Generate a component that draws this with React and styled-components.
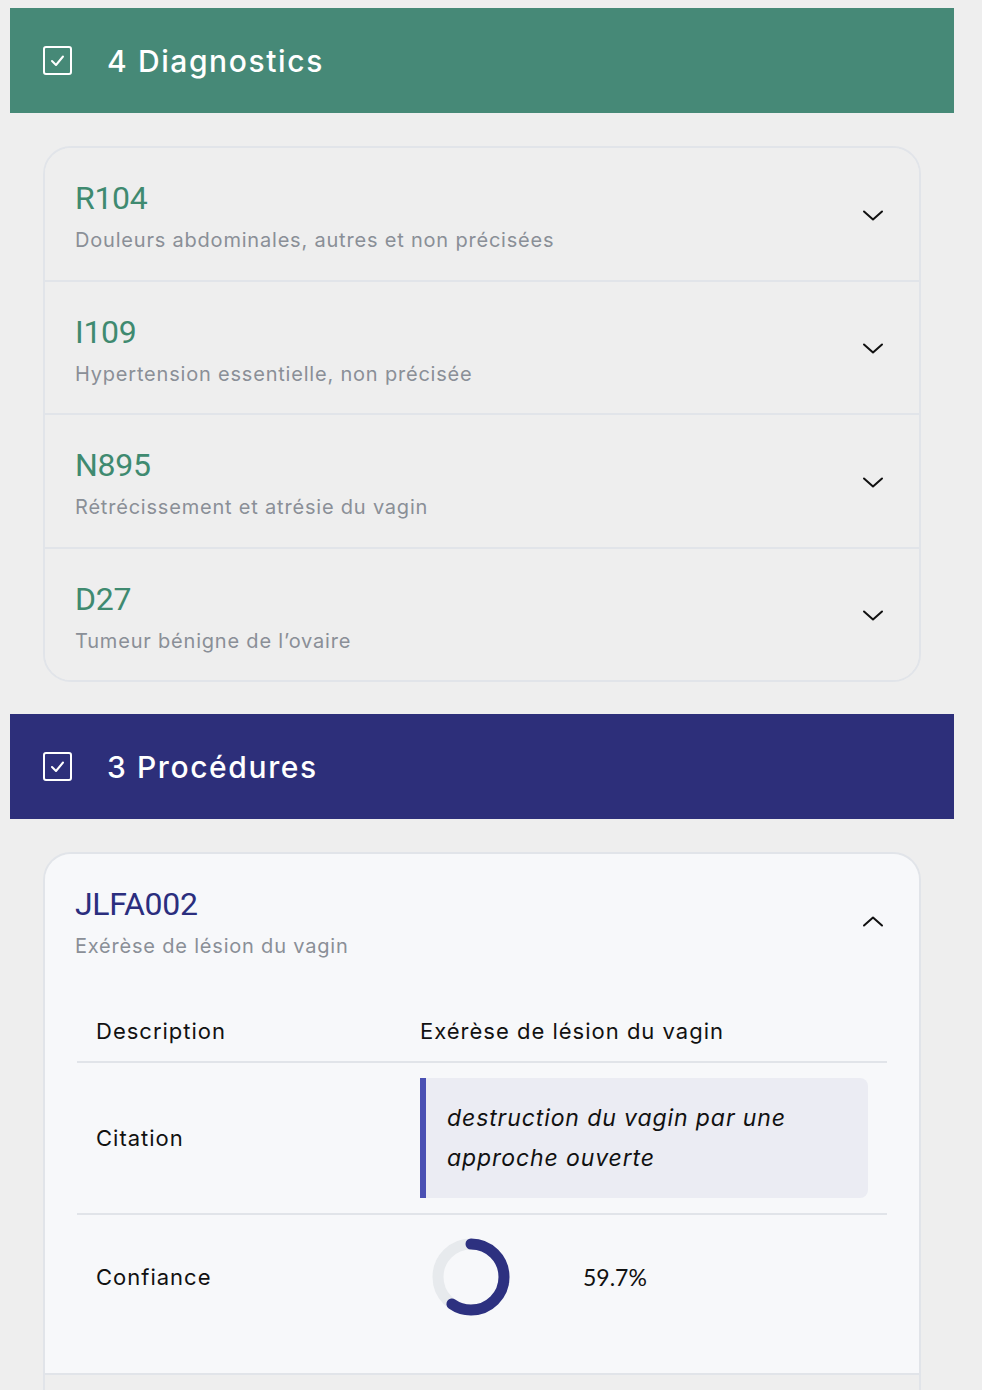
import React from 'react';
import styled, { createGlobalStyle } from 'styled-components';

const GlobalStyle = createGlobalStyle`
  html, body {
    margin: 0;
    padding: 0;
    background: #eeeeee;
  }
  body {
    font-family: Inter, "Noto Sans", sans-serif;
    color: #111;
  }
`;

const diagnostics = [
  { code: 'R104', label: 'Douleurs abdominales, autres et non précisées' },
  { code: 'I109', label: 'Hypertension essentielle, non précisée' },
  { code: 'N895', label: 'Rétrécissement et atrésie du vagin' },
  { code: 'D27', label: 'Tumeur bénigne de l’ovaire' },
];

const procedures = [
  {
    code: 'JLFA002',
    label: 'Exérèse de lésion du vagin',
    open: true,
    description: 'Exérèse de lésion du vagin',
    citation: 'destruction du vagin par une approche ouverte',
    confidence: 59.7,
  },
  { code: 'JLFA001', label: 'Exérèse de lésion du vagin' },
  { code: 'JKFA001', label: 'Exérèse de lésion du vagin' },
];

// Page wrapper
const Page = styled.div`
  width: 944px;
  padding: 8px 0 40px 10px;
`;

// Coloured section banner
const SectionHeader = styled.div`
  height: 105px;
  background: ${(p) => p.$color};
  display: flex;
  align-items: center;
  padding-left: 33px;
  gap: 35px;
  color: #ffffff;
`;

const SectionTitle = styled.h2`
  margin: 0;
  font-size: 30px;
  font-weight: 500;
  letter-spacing: 1.6px;
`;

const CheckIcon = styled.svg`
  width: 29px;
  height: 29px;
  flex-shrink: 0;
`;

// Accordion card
const Card = styled.div`
  margin: 33px 33px 32px 33px;
  border: 2px solid #e1e4e9;
  border-radius: 28px;
  overflow: hidden;
`;

const Item = styled.div`
  background: ${(p) => (p.$open ? '#f7f8fa' : '#eeeeee')};
  & + & {
    border-top: 2px solid #e1e4e9;
  }
`;

const ItemHeader = styled.div`
  display: flex;
  align-items: center;
  justify-content: space-between;
  padding: 28px 34px 26.5px 30px;
`;

const ItemText = styled.div`
  display: flex;
  flex-direction: column;
`;

const Code = styled.div`
  font-family: Roboto, "Noto Sans", sans-serif;
  font-size: 32px;
  line-height: 44px;
  letter-spacing: -0.3px;
  color: ${(p) => p.$color};
`;

const Label = styled.div`
  margin-top: 7px;
  font-size: 20px;
  line-height: 26px;
  color: #8a8f97;
  letter-spacing: 0.8px;
`;

const Chevron = styled.svg`
  width: 24px;
  height: 24px;
  flex-shrink: 0;
`;

// Detail table inside an opened item
const Details = styled.div`
  padding: 15px 32px 34px 32px;
`;

const Row = styled.div`
  display: grid;
  grid-template-columns: 40% 60%;
  align-items: center;
  min-height: ${(p) => p.$h || 'auto'};
  & + & {
    border-top: 2px solid #e1e4e9;
  }
`;

const Cell = styled.div`
  padding: 15px 19px;
  font-size: 22px;
  line-height: 30px;
  letter-spacing: 1px;
  color: #111;
`;

const Quote = styled.blockquote`
  margin: 0;
  padding: 20px 20px 20px 21px;
  background: #ebecf3;
  border-left: 6px solid #4a50b3;
  border-radius: 0 8px 8px 0;
  font-style: italic;
  font-size: 23px;
  line-height: 40px;
  letter-spacing: 0.9px;
  color: #111;
`;

const Gauge = styled.div`
  display: flex;
  align-items: center;
  gap: 72px;
  padding: 20px 30px;
`;

const Percent = styled.span`
  font-family: Lato, "Noto Sans", sans-serif;
  font-size: 23px;
  color: #111;
`;

const Check = () => (
  <CheckIcon viewBox="0 0 29 29" fill="none">
    <rect x="1" y="1" width="27" height="27" rx="2" stroke="#fff" strokeWidth="2" />
    <path d="M9 15l4 4 7-8.5" stroke="#fff" strokeWidth="2" strokeLinecap="round" strokeLinejoin="round" />
  </CheckIcon>
);

const Arrow = ({ up }) => (
  <Chevron viewBox="0 0 24 24" fill="none">
    <path
      d={up ? 'M3 16.5l9-8 9 8' : 'M3 8.5l9 8 9-8'}
      stroke="#111"
      strokeWidth="2"
      strokeLinecap="round"
      strokeLinejoin="round"
    />
  </Chevron>
);

const Donut = ({ value }) => {
  const r = 33;
  const c = 2 * Math.PI * r;
  return (
    <svg width="80" height="80" viewBox="0 0 80 80">
      <circle cx="40" cy="40" r={r} fill="none" stroke="#e7eaed" strokeWidth="11" />
      <circle
        cx="40"
        cy="40"
        r={r}
        fill="none"
        stroke="#2d3180"
        strokeWidth="11"
        strokeLinecap="round"
        strokeDasharray={`${(c * value) / 100} ${c}`}
        transform="rotate(-90 40 40)"
      />
    </svg>
  );
};

const Accordion = ({ items, color }) => (
  <Card>
    {items.map((it) => (
      <Item key={it.code} $open={it.open}>
        <ItemHeader>
          <ItemText>
            <Code $color={color}>{it.code}</Code>
            <Label>{it.label}</Label>
          </ItemText>
          <Arrow up={it.open} />
        </ItemHeader>
        {it.open && (
          <Details>
            <Row>
              <Cell>Description</Cell>
              <Cell>{it.description}</Cell>
            </Row>
            <Row>
              <Cell>Citation</Cell>
              <Cell>
                <Quote>{it.citation}</Quote>
              </Cell>
            </Row>
            <Row $h="124px">
              <Cell>Confiance</Cell>
              <Gauge>
                <Donut value={it.confidence} />
                <Percent>{it.confidence}%</Percent>
              </Gauge>
            </Row>
          </Details>
        )}
      </Item>
    ))}
  </Card>
);

const App = () => (
  <Page>
    <GlobalStyle />
    <SectionHeader $color="#468977">
      <Check />
      <SectionTitle>4 Diagnostics</SectionTitle>
    </SectionHeader>
    <Accordion items={diagnostics} color="#3f8a70" />
    <SectionHeader $color="#2d2f7a">
      <Check />
      <SectionTitle>3 Procédures</SectionTitle>
    </SectionHeader>
    <Accordion items={procedures} color="#2b2e7e" />
  </Page>
);

export default App;
